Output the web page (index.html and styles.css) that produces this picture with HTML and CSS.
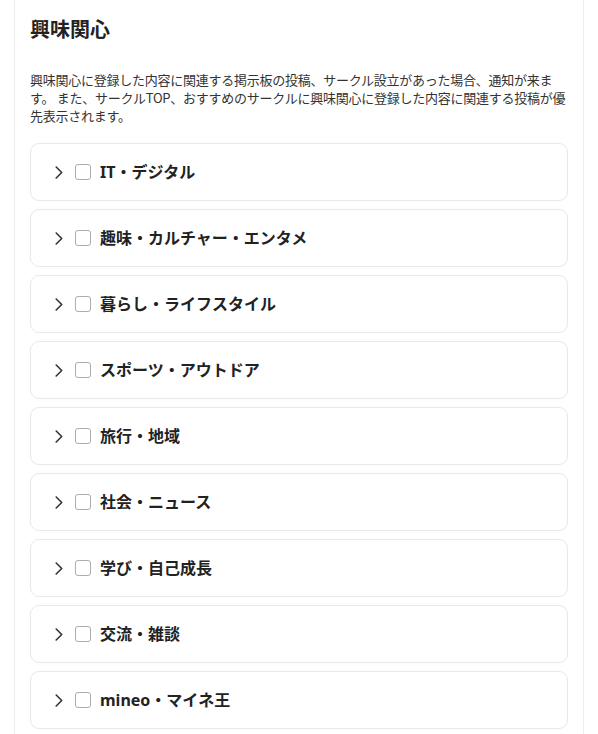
FILE: index.html
```html
<!DOCTYPE html>
<html lang="ja">
<head>
<meta charset="utf-8">
<title>興味関心</title>
<link rel="stylesheet" href="styles.css">
</head>
<body>
<section class="panel">
  <h1 class="title">興味関心</h1>
  <p class="desc">興味関心に登録した内容に関連する掲示板の投稿、サークル設立があった場合、通知が来ます。 また、サークルTOP、おすすめのサークルに興味関心に登録した内容に関連する投稿が優先表示されます。</p>
  <ul class="list">
    <li class="item"><svg class="chev" viewBox="0 0 8 13" width="8" height="13"><path d="M1.2 1 L6.7 6.5 L1.2 12"/></svg><span class="box"></span><span class="label">IT・デジタル</span></li>
    <li class="item"><svg class="chev" viewBox="0 0 8 13" width="8" height="13"><path d="M1.2 1 L6.7 6.5 L1.2 12"/></svg><span class="box"></span><span class="label">趣味・カルチャー・エンタメ</span></li>
    <li class="item"><svg class="chev" viewBox="0 0 8 13" width="8" height="13"><path d="M1.2 1 L6.7 6.5 L1.2 12"/></svg><span class="box"></span><span class="label">暮らし・ライフスタイル</span></li>
    <li class="item"><svg class="chev" viewBox="0 0 8 13" width="8" height="13"><path d="M1.2 1 L6.7 6.5 L1.2 12"/></svg><span class="box"></span><span class="label">スポーツ・アウトドア</span></li>
    <li class="item"><svg class="chev" viewBox="0 0 8 13" width="8" height="13"><path d="M1.2 1 L6.7 6.5 L1.2 12"/></svg><span class="box"></span><span class="label">旅行・地域</span></li>
    <li class="item"><svg class="chev" viewBox="0 0 8 13" width="8" height="13"><path d="M1.2 1 L6.7 6.5 L1.2 12"/></svg><span class="box"></span><span class="label">社会・ニュース</span></li>
    <li class="item"><svg class="chev" viewBox="0 0 8 13" width="8" height="13"><path d="M1.2 1 L6.7 6.5 L1.2 12"/></svg><span class="box"></span><span class="label">学び・自己成長</span></li>
    <li class="item"><svg class="chev" viewBox="0 0 8 13" width="8" height="13"><path d="M1.2 1 L6.7 6.5 L1.2 12"/></svg><span class="box"></span><span class="label">交流・雑談</span></li>
    <li class="item"><svg class="chev" viewBox="0 0 8 13" width="8" height="13"><path d="M1.2 1 L6.7 6.5 L1.2 12"/></svg><span class="box"></span><span class="label">mineo・マイネ王</span></li>
  </ul>
</section>
</body>
</html>
```
FILE: styles.css
```css
html, body {
  margin: 0;
  padding: 0;
  background: #fff;
}
body {
  font-family: "Noto Sans", "Noto Sans CJK JP", sans-serif;
  color: #333;
}
.panel {
  box-sizing: border-box;
  width: 570px;
  margin-left: 14px;
  padding: 15px 15px 20px;
  border-left: 1px solid #ececec;
  border-right: 1px solid #ececec;
}
.title {
  margin: 0;
  font-size: 20px;
  line-height: 30px;
  font-weight: 700;
  color: #222;
}
.desc {
  margin: 26px 0 0;
  font-family: "Noto Sans CJK JP", sans-serif;
  font-size: 13px;
  line-height: 18px;
  letter-spacing: -0.25px;
  color: #333;
  text-spacing-trim: space-all;
}
.list {
  list-style: none;
  margin: 18px 0 0;
  padding: 0;
  display: flex;
  flex-direction: column;
  gap: 8px;
}
.item {
  box-sizing: border-box;
  height: 58px;
  display: flex;
  align-items: center;
  padding-left: 24px;
  border: 1px solid #e8e8e8;
  border-radius: 9px;
  background: #fff;
}
.chev {
  flex: none;
  fill: none;
  stroke: #333;
  stroke-width: 1.6;
  stroke-linecap: round;
  stroke-linejoin: round;
  margin-right: 12px;
}
.box {
  flex: none;
  box-sizing: border-box;
  width: 16px;
  height: 16px;
  border: 1px solid #ababab;
  border-radius: 3px;
  background: #fff;
  margin-right: 9px;
}
.label {
  font-size: 16px;
  line-height: 24px;
  font-weight: 700;
  color: #222;
}
```
